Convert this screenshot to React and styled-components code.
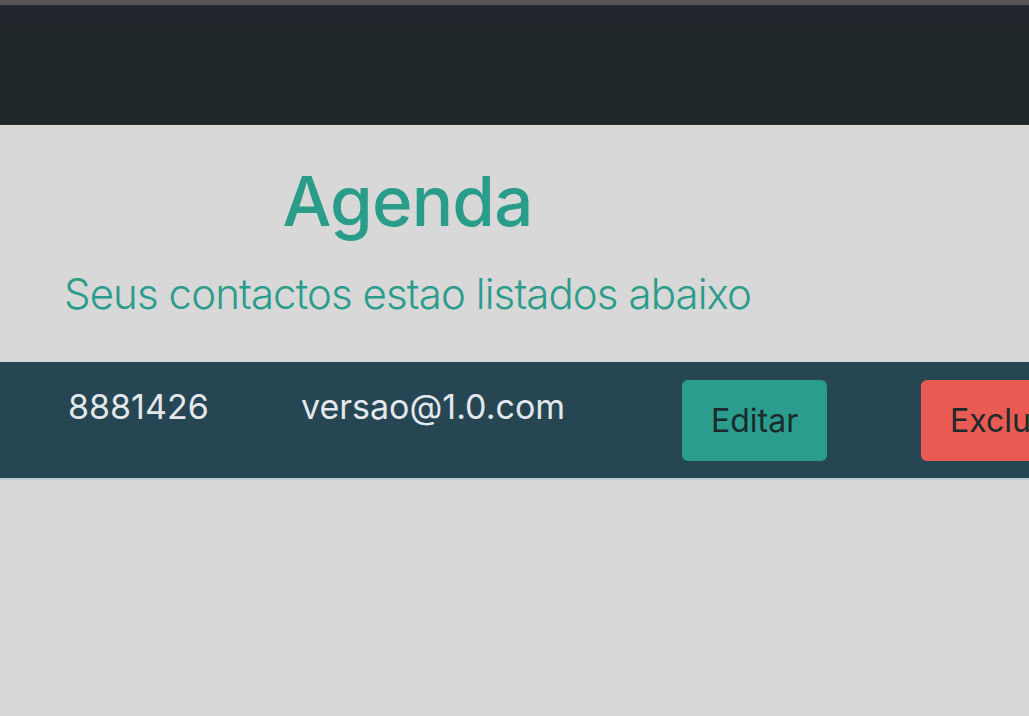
import React from "react";
import styled, { createGlobalStyle } from "styled-components";

const contacts = [{ id: 1, phone: "8881426", email: "versao@1.0.com" }];

const App = () => {
    return (
        <>
            <GlobalStyle />
            <Page>
                <TopStrip />
                <Header />
                <Hero>
                    <Title>Agenda</Title>
                    <Subtitle>Seus contactos estao listados abaixo</Subtitle>
                </Hero>
                <TableWrap>
                    <Table>
                        <tbody>
                            {contacts.map((c) => (
                                <Row key={c.id}>
                                    <Cell $w={50} />
                                    <TextCell $w={233}>{c.phone}</TextCell>
                                    <TextCell $w={379}>{c.email}</TextCell>
                                    <Cell $w={239}>
                                        <Button $bg="#2a9d8f">Editar</Button>
                                    </Cell>
                                    <Cell $w={200}>
                                        <Button $bg="#e85a52">Excluir</Button>
                                    </Cell>
                                </Row>
                            ))}
                        </tbody>
                    </Table>
                </TableWrap>
            </Page>
        </>
    );
};

const GlobalStyle = createGlobalStyle`
    html, body {
        margin: 0;
        padding: 0;
        background: #d8d8d8;
        overflow: hidden;
    }
    body {
        font-family: Inter, "Liberation Sans", sans-serif;
    }
`;

const Page = styled.div`
    width: 1029px;
    height: 716px;
    background: #d8d8d8;
    overflow: hidden;
`;

const TopStrip = styled.div`
    height: 5px;
    background: #565656;
    border-bottom: 1px solid #2a2c2e;
`;

const Header = styled.header`
    height: 118px;
    background: linear-gradient(#212630, #202729 20%);
    border-bottom: 1px solid #2c3234;
`;

const Hero = styled.section`
    display: inline-flex;
    flex-direction: column;
    align-items: center;
    margin-left: 64px;
    padding-top: 36px;
    height: 195px;
    box-sizing: border-box;
    vertical-align: top;
`;

const Title = styled.h1`
    margin: 0;
    font-size: 69px;
    font-weight: 500;
    line-height: 80px;
    color: #2a9d8a;
    letter-spacing: -0.8px;
`;

const Subtitle = styled.p`
    margin: 28px 0 0;
    font-size: 42px;
    font-weight: 300;
    line-height: 50px;
    color: #2a9d8a;
    letter-spacing: -0.9px;
    white-space: nowrap;
`;

const TableWrap = styled.div`
    margin-top: 42px;
    width: 1029px;
    overflow: hidden;
`;

const Table = styled.table`
    border-collapse: collapse;
    table-layout: fixed;
    width: 1101px;
`;

const Row = styled.tr`
    background: #264653;
    height: 117px;
`;

const Cell = styled.td`
    width: ${(p) => p.$w}px;
    padding: 18px 0 0 19px;
    box-sizing: border-box;
    vertical-align: top;
    border-bottom: 2px solid #bcc8d4;
    border-left: 1px solid #264653;
`;

const TextCell = styled(Cell)`
    padding-top: 24px;
    padding-left: 17px;
    font-size: 34px;
    line-height: 42px;
    color: #e2e8ec;
    white-space: nowrap;
`;

const Button = styled.button`
    height: 81px;
    padding: 0 29px;
    border: none;
    border-radius: 6px;
    background: ${(p) => p.$bg};
    color: #1d2a2c;
    font-family: Inter, "Liberation Sans", sans-serif;
    font-size: 32px;
    white-space: nowrap;
    cursor: pointer;
`;

export default App;
